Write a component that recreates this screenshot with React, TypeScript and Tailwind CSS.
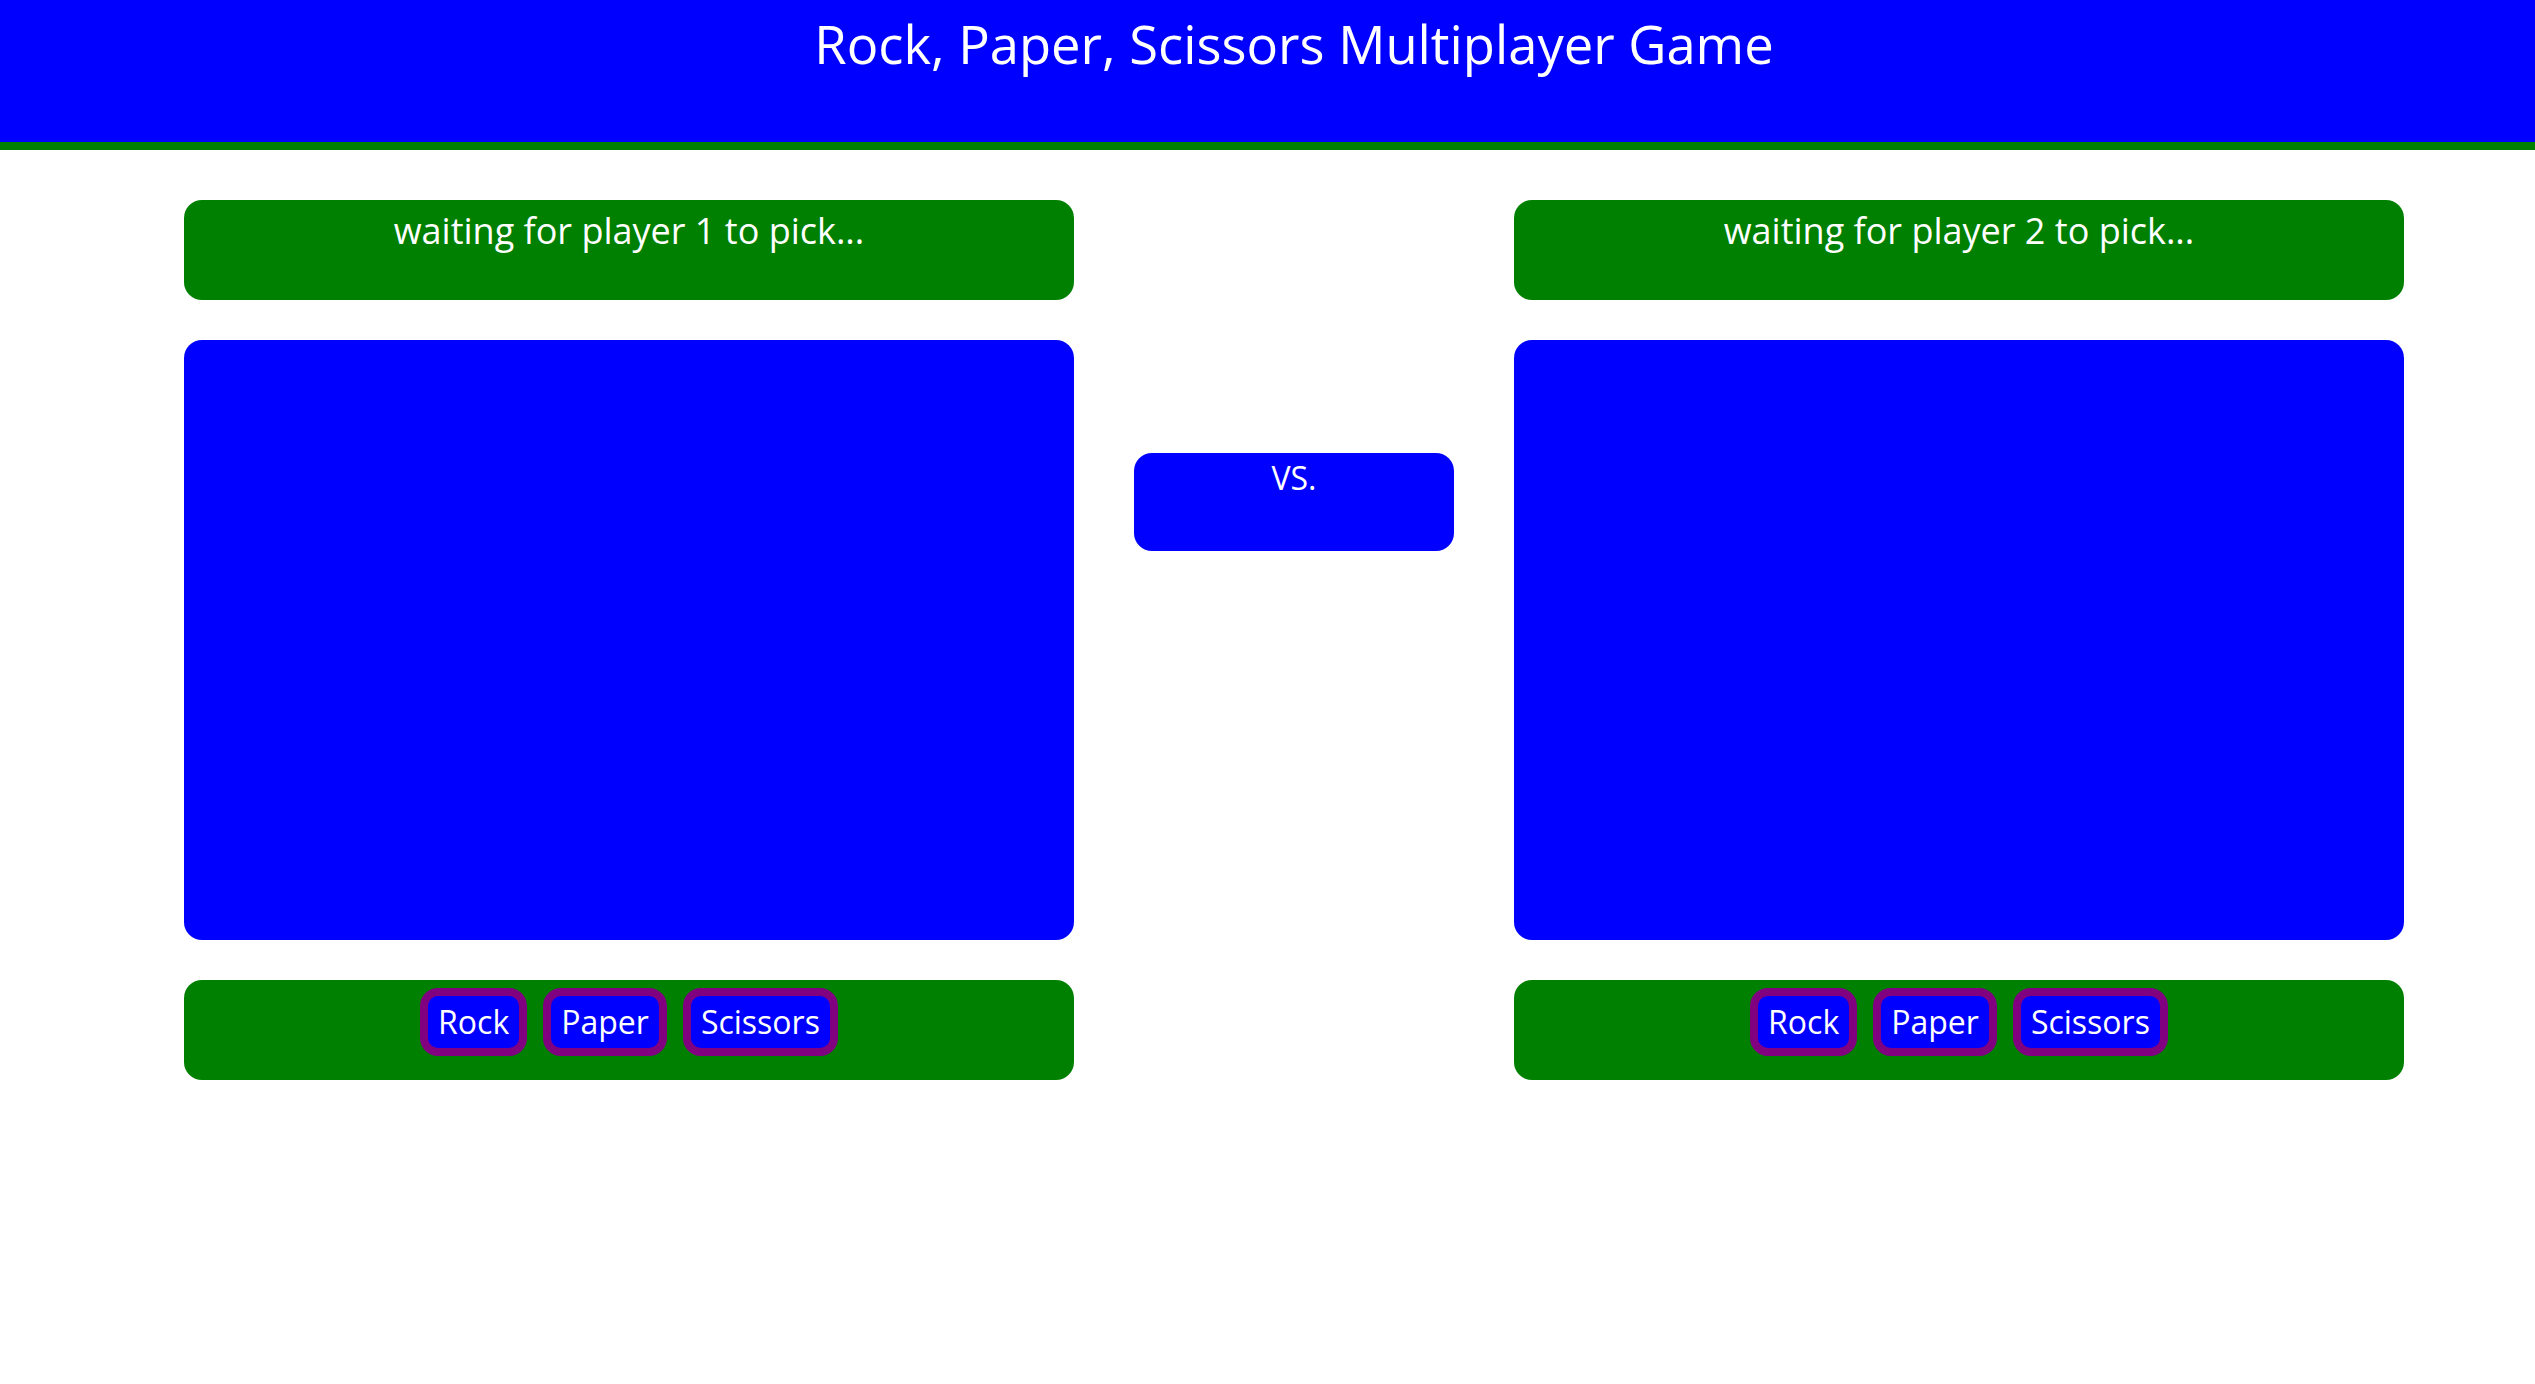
const font = { fontFamily: '"Open Sans", "Noto Sans", sans-serif' };

function ChoiceButton({ label }: { label: string }) {
  return (
    <button className="h-[68px] rounded-[18px] border-8 border-[#800080] bg-[#0000ff] px-[10px] text-[32px] leading-none text-white">
      {label}
    </button>
  );
}

function PlayerColumn({ player }: { player: number }) {
  return (
    <div className="flex w-[890px] flex-col gap-[40px]">
      <div className="h-[100px] rounded-[18px] bg-[#008000] pt-[4px] text-center text-[36px] text-white">
        waiting for player {player} to pick...
      </div>
      <div className="h-[600px] rounded-[18px] bg-[#0000ff]" />
      <div className="flex h-[100px] justify-center gap-[16px] rounded-[18px] bg-[#008000] pt-[8px]">
        <ChoiceButton label="Rock" />
        <ChoiceButton label="Paper" />
        <ChoiceButton label="Scissors" />
      </div>
    </div>
  );
}

export default function App() {
  return (
    <div className="min-h-screen bg-white" style={font}>
      <header className="h-[150px] border-b-8 border-[#008000] bg-[#0000ff] pl-[53px] pt-[5px] text-center">
        <h1 className="text-[52.5px] text-white">Rock, Paper, Scissors Multiplayer Game</h1>
      </header>
      <main className="flex gap-[60px] pl-[184px] pt-[50px]">
        <PlayerColumn player={1} />
        <div className="w-[320px]">
          <div className="mt-[253px] h-[98px] rounded-[18px] bg-[#0000ff] pt-[1px] text-center text-[32px] text-white">
            VS.
          </div>
        </div>
        <PlayerColumn player={2} />
      </main>
    </div>
  );
}
